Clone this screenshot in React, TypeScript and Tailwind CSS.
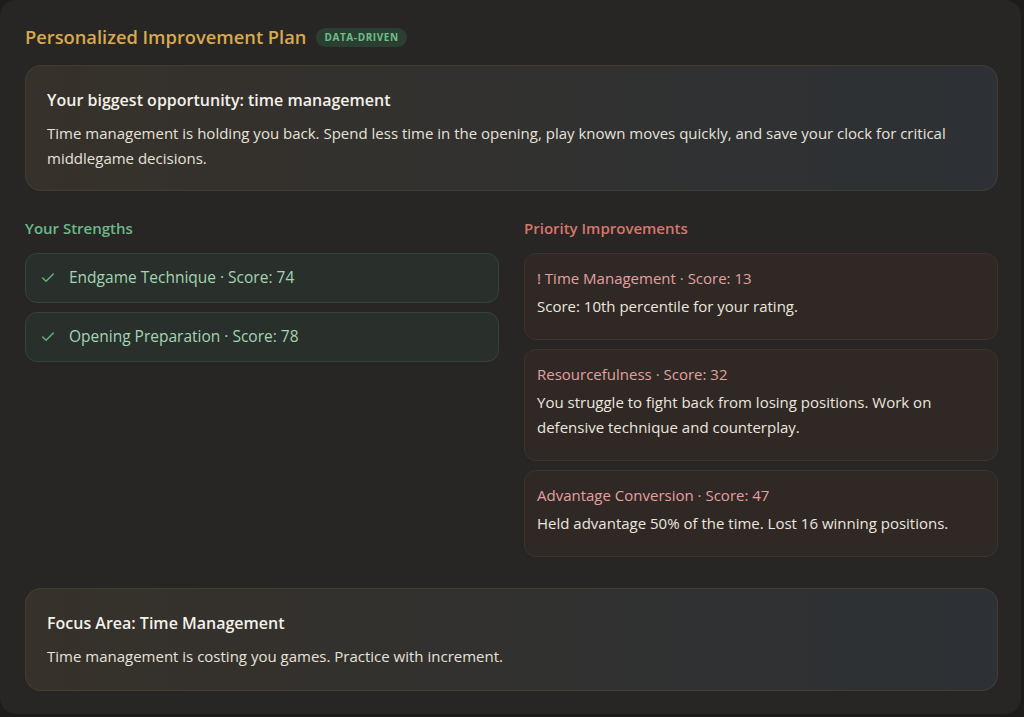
import { Check } from "lucide-react";

const FONT = { fontFamily: "'Open Sans', 'Noto Sans', sans-serif" };

const STRENGTHS = [
  { name: "Endgame Technique", score: 74 },
  { name: "Opening Preparation", score: 78 },
];

const IMPROVEMENTS = [
  {
    title: "! Time Management · Score: 13",
    body: "Score: 10th percentile for your rating.",
    h: "h-[87px]",
  },
  {
    title: "Resourcefulness · Score: 32",
    body: "You struggle to fight back from losing positions. Work on defensive technique and counterplay.",
    h: "h-[112px]",
  },
  {
    title: "Advantage Conversion · Score: 47",
    body: "Held advantage 50% of the time. Lost 16 winning positions.",
    h: "h-[87px]",
  },
];

function HighlightCard({ title, body, className }: { title: string; body: string; className: string }) {
  return (
    <div
      className={`rounded-2xl border border-[#4a4330]/70 bg-gradient-to-r from-[#36312a] to-[#2d3135] px-[21px] ${className}`}
    >
      <h3 className="text-[16px] font-semibold text-[#f3f0ea] leading-6">{title}</h3>
      <p className="mt-[9px] text-[15px] leading-[25px] text-[#e6e2da]">{body}</p>
    </div>
  );
}

export default function App() {
  return (
    <div className="w-[1024px] h-[717px] bg-[#1d1c1a] overflow-hidden" style={FONT}>
      <div className="w-[1021px] h-[714px] rounded-2xl bg-[#272624] pl-[25px] pr-[23px] pt-[24px]">
        {/* Title row */}
        <div className="flex items-center gap-[10px] h-[26px]">
          <h2 className="text-[18.3px] font-semibold text-[#d9a94f]">Personalized Improvement Plan</h2>
          <span className="rounded-full bg-[#2a3f31] px-[8px] py-[2px] text-[10px] font-bold tracking-[0.06em] text-[#6cc08a]">
            DATA-DRIVEN
          </span>
        </div>

        <HighlightCard
          className="mt-[15px] h-[126px] pt-[22px]"
          title="Your biggest opportunity: time management"
          body="Time management is holding you back. Spend less time in the opening, play known moves quickly, and save your clock for critical middlegame decisions."
        />

        <div className="mt-[27px] grid grid-cols-2 gap-[25px]">
          {/* Strengths */}
          <div>
            <h4 className="text-[15px] font-semibold text-[#6db889] leading-5">Your Strengths</h4>
            <div className="mt-[15px] flex flex-col gap-[9px]">
              {STRENGTHS.map((s) => (
                <div
                  key={s.name}
                  className="flex h-[50px] items-center gap-[13px] rounded-xl border border-[#34433a] bg-[#29302b] px-[14px]"
                >
                  <Check className="w-4 h-4 text-[#5fae7c]" strokeWidth={2.25} />
                  <span className="text-[15.5px] font-medium text-[#a3d4b3]">
                    {s.name} · Score: {s.score}
                  </span>
                </div>
              ))}
            </div>
          </div>

          {/* Improvements */}
          <div>
            <h4 className="text-[15px] font-semibold text-[#d6776b] leading-5">Priority Improvements</h4>
            <div className="mt-[15px] flex flex-col gap-[9px]">
              {IMPROVEMENTS.map((it) => (
                <div
                  key={it.title}
                  className={`rounded-xl border border-[#40322d] bg-[#302825] px-[12px] pt-[14px] ${it.h}`}
                >
                  <div className="text-[15px] font-medium text-[#e3a0a0] leading-5">{it.title}</div>
                  <p className="mt-[6px] text-[15px] leading-[25px] text-[#ebe6df]">{it.body}</p>
                </div>
              ))}
            </div>
          </div>
        </div>

        <HighlightCard
          className="mt-[31px] h-[103px] pt-[22px]"
          title="Focus Area: Time Management"
          body="Time management is costing you games. Practice with increment."
        />
      </div>
    </div>
  );
}
